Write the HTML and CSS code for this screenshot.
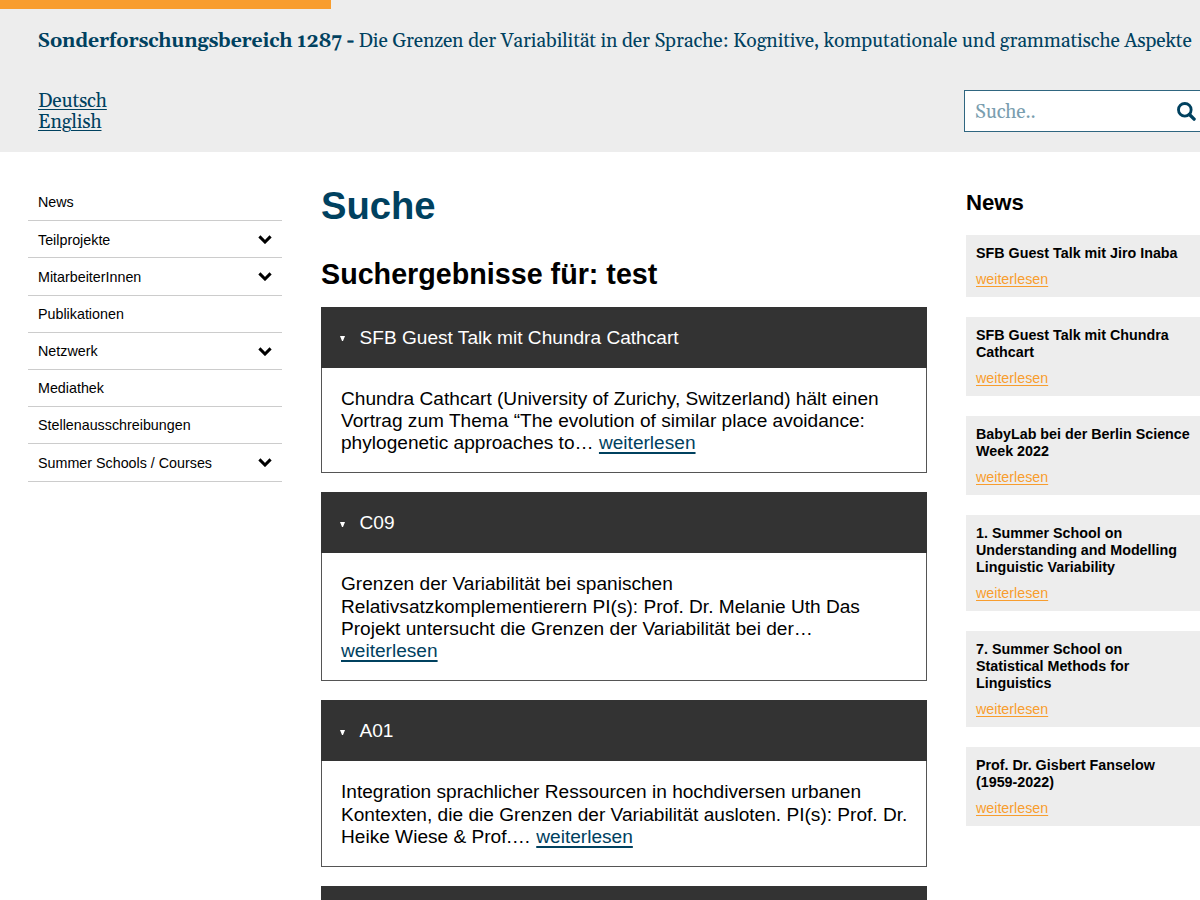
FILE: index.html
```html
<!DOCTYPE html>
<html lang="de">
<head>
<meta charset="utf-8">
<title>Suche</title>
<link rel="stylesheet" href="styles.css">
</head>
<body>
<header class="header">
  <div class="accent"></div>
  <div class="site-title"><strong>Sonderforschungsbereich 1287 <span class="dash">-</span></strong> <span class="subtitle">Die Grenzen der Variabilität in der Sprache: Kognitive, komputationale und grammatische Aspekte</span></div>
  <div class="tools">
    <div class="languages"><a href="#">Deutsch</a><a href="#">English</a></div>
    <div class="search"><span>Suche..</span>
      <svg class="search-icon" viewBox="0 0 18 18"><circle cx="7.4" cy="7.4" r="6" fill="none" stroke="currentColor" stroke-width="2.7"/><path d="M11.8 11.8l4.400 4.400" stroke="currentColor" stroke-width="3.2" stroke-linecap="round"/></svg>
    </div>
  </div>
</header>
<div class="page">
  <nav class="nav">
    <a class="nav-item">News</a>
    <a class="nav-item">Teilprojekte<svg class="chevron" viewBox="0 0 14 9"><path d="M1.4 1.4L7 7l5.600-5.600"/></svg></a>
    <a class="nav-item">MitarbeiterInnen<svg class="chevron" viewBox="0 0 14 9"><path d="M1.4 1.4L7 7l5.600-5.600"/></svg></a>
    <a class="nav-item">Publikationen</a>
    <a class="nav-item">Netzwerk<svg class="chevron" viewBox="0 0 14 9"><path d="M1.4 1.4L7 7l5.600-5.600"/></svg></a>
    <a class="nav-item">Mediathek</a>
    <a class="nav-item">Stellenausschreibungen</a>
    <a class="nav-item">Summer Schools / Courses<svg class="chevron" viewBox="0 0 14 9"><path d="M1.4 1.4L7 7l5.600-5.600"/></svg></a>
  </nav>
  <main class="main">
    <h1>Suche</h1>
    <h2>Suchergebnisse für: test</h2>
    <article class="result">
      <h3><i class="marker"></i>SFB Guest Talk mit Chundra Cathcart</h3>
      <p>Chundra Cathcart (University of Zurichy, Switzerland) hält einen<br>Vortrag zum Thema “The evolution of similar place avoidance:<br>phylogenetic approaches to… <a href="#">weiterlesen</a></p>
    </article>
    <article class="result">
      <h3><i class="marker"></i>C09</h3>
      <p>Grenzen der Variabilität bei spanischen<br>Relativsatzkomplementierern PI(s): Prof. Dr. Melanie Uth Das<br>Projekt untersucht die Grenzen der Variabilität bei der…<br><a href="#">weiterlesen</a></p>
    </article>
    <article class="result">
      <h3><i class="marker"></i>A01</h3>
      <p>Integration sprachlicher Ressourcen in hochdiversen urbanen<br>Kontexten, die die Grenzen der Variabilität ausloten. PI(s): Prof. Dr.<br>Heike Wiese &amp; Prof.… <a href="#">weiterlesen</a></p>
    </article>
    <article class="result"><h3></h3></article>
  </main>
  <aside class="news">
    <h2>News</h2>
    <section><h3>SFB Guest Talk mit Jiro Inaba</h3><a href="#">weiterlesen</a></section>
    <section><h3>SFB Guest Talk mit Chundra<br>Cathcart</h3><a href="#">weiterlesen</a></section>
    <section><h3>BabyLab bei der Berlin Science<br>Week 2022</h3><a href="#">weiterlesen</a></section>
    <section><h3>1. Summer School on<br>Understanding and Modelling<br>Linguistic Variability</h3><a href="#">weiterlesen</a></section>
    <section><h3>7. Summer School on<br>Statistical Methods for<br>Linguistics</h3><a href="#">weiterlesen</a></section>
    <section><h3>Prof. Dr. Gisbert Fanselow<br>(1959-2022)</h3><a href="#">weiterlesen</a></section>
  </aside>
</div>
</body>
</html>
```
FILE: styles.css
```css
* { box-sizing: border-box; }
html, body { margin: 0; height: 900px; overflow: hidden; }
body { width: 1200px; font-family: "Liberation Sans", Arial, sans-serif; color: #000; background: #fff; }
h1, h2, h3, p { margin: 0; }

.header { height: 152px; background: #ededed; color: #00415f; font-family: Gelasio, Georgia, "Liberation Serif", serif; }
.accent { width: 331px; height: 9px; background: #f89d2e; }
.site-title { height: 81px; padding: 22px 0 0 37.5px; font-size: 19.4px; line-height: 22px; letter-spacing: -0.14px; white-space: nowrap; }
.site-title strong { letter-spacing: -0.16px; }
.dash { -webkit-text-stroke: 0.6px currentColor; }
.tools { display: flex; justify-content: space-between; }
.languages { display: flex; flex-direction: column; padding: 1px 0 0 38px; font-size: 19.4px; line-height: 21px; letter-spacing: -0.2px; }
.languages a { color: inherit; text-decoration-thickness: 1px; text-underline-offset: 2px; }
.search { display: flex; align-items: center; justify-content: space-between; width: 236px; height: 42px; padding: 0 4.5px 0 10px; border: 1px solid #2f6680; border-right: 0; background: #fff; font-size: 19.4px; letter-spacing: -0.2px; }
.search span { color: #7a9eaf; padding-top: 2px; }
.search-icon { width: 19px; height: 19px; color: #00415f; }

.page { display: flex; height: 748px; overflow: hidden; }
.nav { width: 254px; margin: 32px 39px 0 28px; flex: none; }
.nav-item { display: flex; align-items: center; justify-content: space-between; height: 37.2px; padding: 0.5px 10px 0; border-bottom: 1px solid #ccc; font-size: 14.3px; }
.chevron { width: 14px; height: 9px; fill: none; stroke: #000; stroke-width: 3; }

.main { width: 606px; flex: none; }
h1 { margin-top: 31px; font-size: 38.2px; line-height: 45px; color: #00415f; }
.main h2 { margin-top: 29px; font-size: 28.7px; line-height: 34px; }
.result { margin-bottom: 19.4px; border: 1px solid #555; }
.main h2 + .result { margin-top: 15.5px; }
.result h3 { display: flex; align-items: center; height: 61px; margin: -1px -1px 0; padding: 1px 0 0 19px; background: #333; color: #fff; font-size: 19.1px; font-weight: 400; }
.marker { width: 5px; margin-right: 14.5px; margin-top: 2px; border: 2.5px solid transparent; border-top: 5px solid #fff; border-bottom: 0; }
.result p { padding: 20px 19px 17.8px; font-size: 19.1px; line-height: 22.2px; white-space: nowrap; }
.result a { color: #00415f; text-underline-offset: 3px; text-decoration-thickness: 1.5px; }

.news { width: 234px; margin-left: 39px; flex: none; }
.news h2 { margin: 37px 0 17.9px; font-size: 22.2px; line-height: 28px; }
.news section { margin-bottom: 19.5px; padding: 10px 10px 9.7px; background: #ededed; font-size: 14.27px; line-height: 16.9px; white-space: nowrap; }
.news h3 { margin-bottom: 9.1px; font-size: 14.3px; }
.news a { display: block; color: #f89d2e; text-underline-offset: 2px; text-decoration-thickness: 1px; }
```
